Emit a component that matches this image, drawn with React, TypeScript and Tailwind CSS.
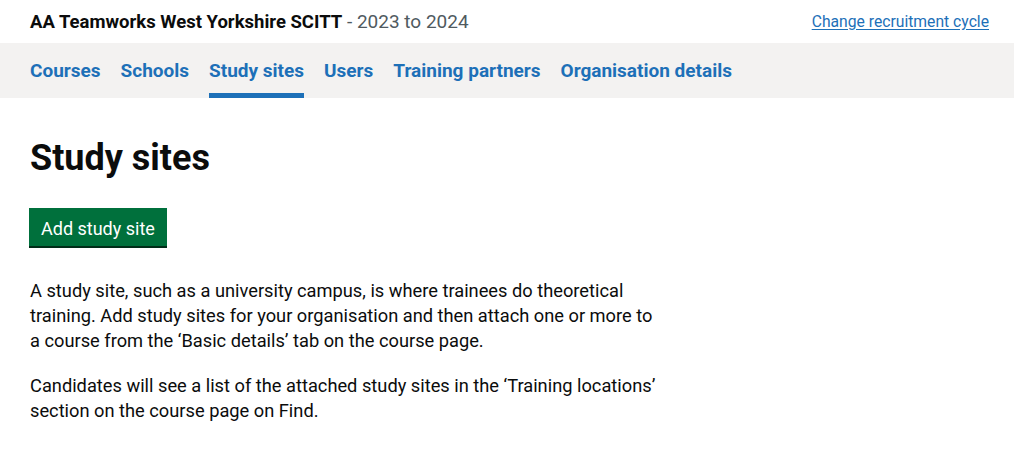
const navItems = [
  { label: "Courses", active: false },
  { label: "Schools", active: false },
  { label: "Study sites", active: true },
  { label: "Users", active: false },
  { label: "Training partners", active: false },
  { label: "Organisation details", active: false },
];

const App = () => {
  return (
    <div className="min-h-[467px] bg-white text-[#0b0c0c] font-['Roboto',Arial,sans-serif]">
      <header className="flex items-center justify-between h-[43px] px-[30px] pr-[25px]">
        <div className="leading-none">
          <span className="text-[18.5px] font-bold">AA Teamworks West Yorkshire SCITT</span>
          <span className="text-[19px] text-[#505a5f]"> - 2023 to 2024</span>
        </div>
        <a href="#" className="text-[15.7px] text-[#1d70b8] underline underline-offset-2">
          Change recruitment cycle
        </a>
      </header>

      <nav className="bg-[#f3f2f1] h-[55px] px-[30px]">
        <ul className="flex gap-5 h-full">
          {navItems.map((item) => (
            <li
              key={item.label}
              className={`flex items-center h-full border-b-[5px] ${
                item.active ? "border-[#1d70b8]" : "border-transparent"
              }`}
            >
              <a href="#" className="text-[19px] font-bold text-[#1d70b8] pt-[7px]">
                {item.label}
              </a>
            </li>
          ))}
        </ul>
      </nav>

      <main className="px-[30px] pt-[40px]">
        <h1 className="text-[36px] font-bold leading-[40px]">Study sites</h1>

        <button className="mt-[30px] -ml-px bg-[#00703c] text-white text-[18px] px-[12px] pt-[3px] h-[38px] shadow-[0_2px_0_#002d18]">
          Add study site
        </button>

        <div className="mt-[32px] max-w-[632px] text-[18.25px] leading-[25px]">
          <p>
            A study site, such as a university campus, is where trainees do theoretical
            training. Add study sites for your organisation and then attach one or more to
            a course from the ‘Basic details’ tab on the course page.
          </p>
          <p className="mt-[20px]">
            Candidates will see a list of the attached study sites in the ‘Training locations’
            section on the course page on Find.
          </p>
        </div>
      </main>
    </div>
  );
};

export default App;
